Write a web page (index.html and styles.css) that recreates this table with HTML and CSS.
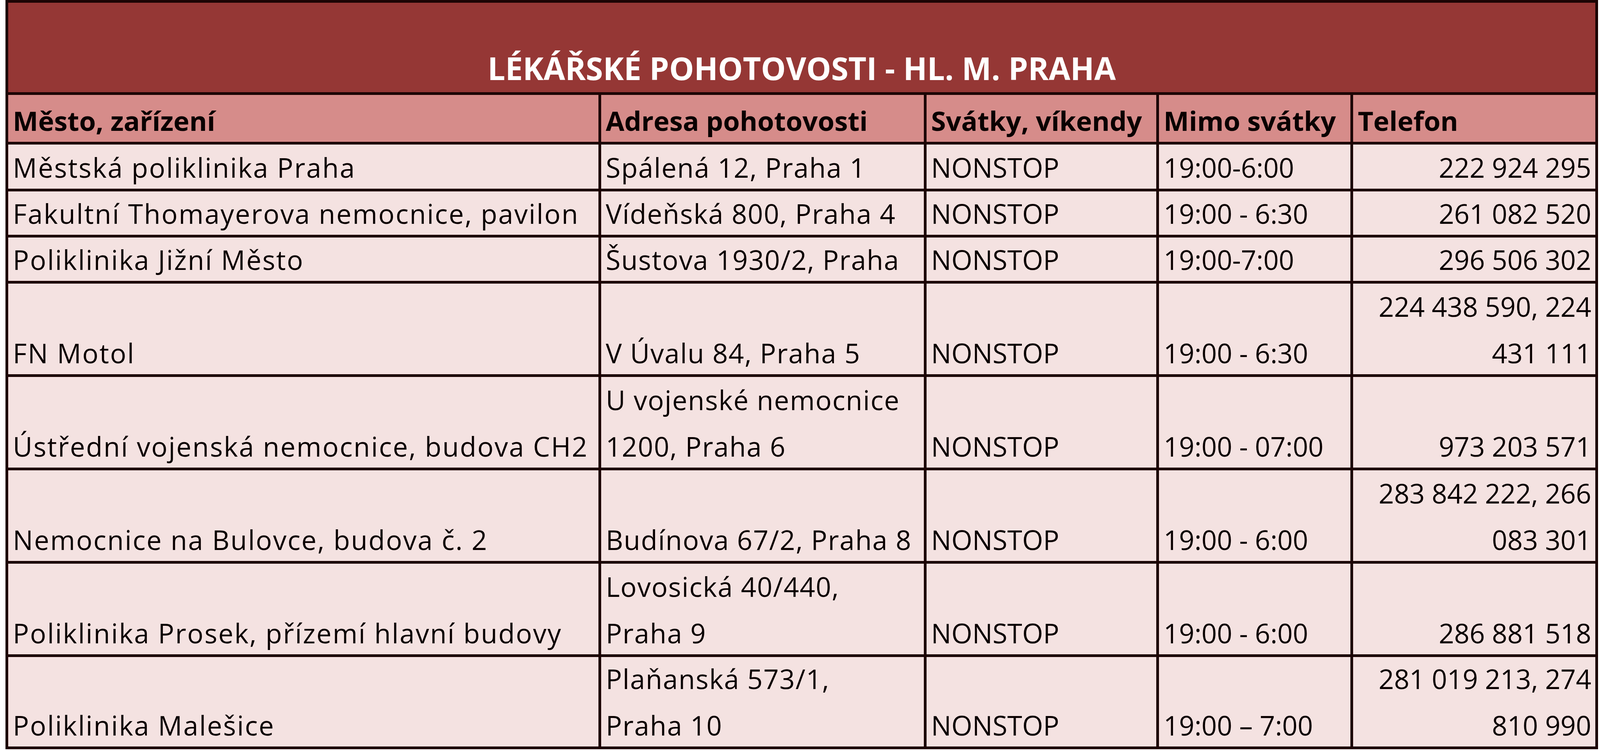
FILE: index.html
```html
<!DOCTYPE html>
<html lang="cs">
<head>
<meta charset="utf-8">
<title>Lékařské pohotovosti - hl. m. Praha</title>
<link rel="stylesheet" href="styles.css">
</head>
<body>
<div class="sheet">
  <div class="cell title"><span>LÉKÁŘSKÉ POHOTOVOSTI - HL. M. PRAHA</span></div>

  <div class="cell head"><span>Město, zařízení</span></div>
  <div class="cell head"><span>Adresa pohotovosti</span></div>
  <div class="cell head"><span>Svátky, víkendy</span></div>
  <div class="cell head"><span>Mimo svátky</span></div>
  <div class="cell head"><span>Telefon</span></div>

  <div class="cell c1"><span>Městská poliklinika Praha</span></div>
  <div class="cell c2"><span>Spálená 12, Praha 1</span></div>
  <div class="cell"><span>NONSTOP</span></div>
  <div class="cell"><span>19:00-6:00</span></div>
  <div class="cell num"><span>222 924 295</span></div>

  <div class="cell c1"><span>Fakultní Thomayerova nemocnice, pavilon</span></div>
  <div class="cell c2"><span>Vídeňská 800, Praha 4</span></div>
  <div class="cell"><span>NONSTOP</span></div>
  <div class="cell"><span>19:00 - 6:30</span></div>
  <div class="cell num"><span>261 082 520</span></div>

  <div class="cell c1"><span>Poliklinika Jižní Město</span></div>
  <div class="cell c2"><span>Šustova 1930/2, Praha</span></div>
  <div class="cell"><span>NONSTOP</span></div>
  <div class="cell"><span>19:00-7:00</span></div>
  <div class="cell num"><span>296 506 302</span></div>

  <div class="cell c1"><span>FN Motol</span></div>
  <div class="cell c2"><span>V Úvalu 84, Praha 5</span></div>
  <div class="cell"><span>NONSTOP</span></div>
  <div class="cell"><span>19:00 - 6:30</span></div>
  <div class="cell num"><span>224 438 590, 224<br>431 111</span></div>

  <div class="cell c1"><span>Ústřední vojenská nemocnice, budova CH2</span></div>
  <div class="cell c2"><span>U vojenské nemocnice<br>1200, Praha 6</span></div>
  <div class="cell"><span>NONSTOP</span></div>
  <div class="cell"><span>19:00 - 07:00</span></div>
  <div class="cell num"><span>973 203 571</span></div>

  <div class="cell c1"><span>Nemocnice na Bulovce, budova č. 2</span></div>
  <div class="cell c2"><span>Budínova 67/2, Praha 8</span></div>
  <div class="cell"><span>NONSTOP</span></div>
  <div class="cell"><span>19:00 - 6:00</span></div>
  <div class="cell num"><span>283 842 222, 266<br>083 301</span></div>

  <div class="cell c1"><span>Poliklinika Prosek, přízemí hlavní budovy</span></div>
  <div class="cell c2"><span>Lovosická 40/440,<br>Praha 9</span></div>
  <div class="cell"><span>NONSTOP</span></div>
  <div class="cell"><span>19:00 - 6:00</span></div>
  <div class="cell num"><span>286 881 518</span></div>

  <div class="cell c1"><span>Poliklinika Malešice</span></div>
  <div class="cell c2"><span>Plaňanská 573/1,<br>Praha 10</span></div>
  <div class="cell"><span>NONSTOP</span></div>
  <div class="cell"><span>19:00 – 7:00</span></div>
  <div class="cell num"><span>281 019 213, 274<br>810 990</span></div>
</div>
</body>
</html>
```

FILE: styles.css
```css
:root {
  /* one pixel of the 4755px-wide design, scaled to the actual viewport width */
  --u: calc(100vw / 4755);
  --line: #1c0404;
}

html, body {
  margin: 0;
  padding: 0;
  background: #ffffff;
  overflow: hidden;
}

body {
  font-family: "Open Sans", "Liberation Sans", sans-serif;
  color: #0a0000;
}

.sheet {
  display: grid;
  width: calc(4725 * var(--u));
  grid-template-columns: 1762fr 967fr 691fr 577fr 728fr;
  grid-template-rows: 236px 127px 120px 118px 118px 239px 239px 239px 239px 236px;
  margin-left: calc(16 * var(--u));
  border-top: 7px solid var(--line);
  border-left: 7px solid var(--line);
}

.cell {
  box-sizing: border-box;
  min-width: 0;
  display: flex;
  align-items: flex-end;
  padding: 0 calc(14 * var(--u));
  border-right: 7px solid var(--line);
  border-bottom: 7px solid var(--line);
  background: #f4e2e1;
  font-size: calc(80 * var(--u));
  line-height: 119px;
  white-space: nowrap;
  overflow: hidden;
}

.cell.c1 {
  letter-spacing: calc(3 * var(--u));
}

.cell.c2 {
  letter-spacing: calc(2 * var(--u));
}

.cell > span {
  display: block;
  margin-bottom: -5px;
}

.cell.num {
  justify-content: flex-end;
  text-align: right;
  padding-right: calc(12 * var(--u));
}

.cell.head {
  background: #d68c8a;
  font-weight: 700;
}

.cell.title {
  grid-column: 1 / -1;
  justify-content: center;
  background: #953735;
  color: #ffffff;
  font-weight: 700;
  font-size: calc(93 * var(--u));
  line-height: 130px;
}

.cell.title > span {
  margin-bottom: -3px;
}
```
